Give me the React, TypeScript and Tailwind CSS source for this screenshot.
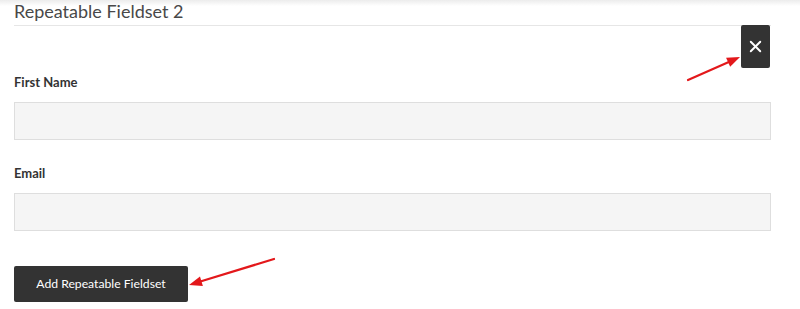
import { X } from "lucide-react";

function Arrow({ x1, y1, x2, y2 }: { x1: number; y1: number; x2: number; y2: number }) {
  const ang = Math.atan2(y2 - y1, x2 - x1);
  const len = 13;
  const half = 5;
  const bx = x2 - len * Math.cos(ang);
  const by = y2 - len * Math.sin(ang);
  const px = -Math.sin(ang) * half;
  const py = Math.cos(ang) * half;
  return (
    <g>
      <line x1={x1} y1={y1} x2={bx + Math.cos(ang) * 2} y2={by + Math.sin(ang) * 2} stroke="#e3181b" strokeWidth={2.2} strokeLinecap="round" />
      <polygon points={`${x2},${y2} ${bx + px},${by + py} ${bx - px},${by - py}`} fill="#e3181b" />
    </g>
  );
}

export default function App() {
  return (
    <div className="relative w-[800px] h-[309px] overflow-hidden bg-white font-['Lato','Open_Sans',sans-serif] text-[#333]">
      {/* faint header shadow at the very top */}
      <div className="h-[6px] bg-gradient-to-b from-[#ececec] to-white" />

      <div className="pl-[14px] pr-[29px] -mt-[6px]">
        <div className="h-[26px] border-b border-[#e6e6e6]">
          <h2 className="text-[18px] leading-[22px] -mt-[2px] font-normal text-[#484848]">
            Repeatable Fieldset 2
          </h2>
        </div>

        <label className="block mt-[46px] mb-[10px] text-[13px] leading-[20px] font-bold text-[#333]">
          First Name
        </label>
        <div className="h-[38px] bg-[#f5f5f5] border border-[#dedede]" />

        <label className="block mt-[23px] mb-[10px] text-[13px] leading-[20px] font-bold text-[#333]">
          Email
        </label>
        <div className="h-[38px] bg-[#f5f5f5] border border-[#dedede]" />

        <button className="mt-[35px] w-[174px] h-[36px] bg-[#333] text-white text-[12.2px] rounded-[2px]">
          Add Repeatable Fieldset
        </button>
      </div>

      {/* remove fieldset button */}
      <button className="absolute left-[741px] top-[25px] w-[29px] h-[43px] bg-[#333] rounded-[2px] flex items-center justify-center text-white">
        <X size={19} strokeWidth={2.4} />
      </button>

      <svg className="absolute inset-0 pointer-events-none" width="800" height="309">
        <Arrow x1={688} y1={80} x2={740} y2={57} />
        <Arrow x1={274} y1={259} x2={189} y2={285} />
      </svg>
    </div>
  );
}
